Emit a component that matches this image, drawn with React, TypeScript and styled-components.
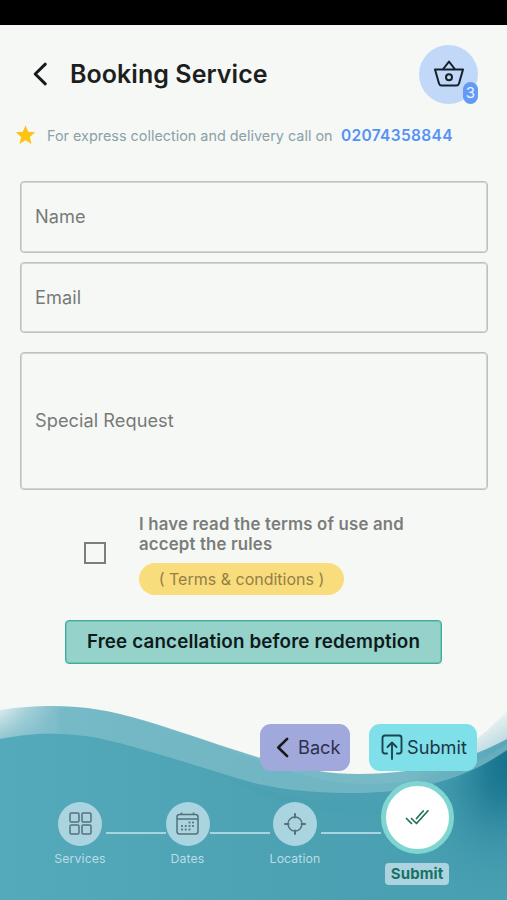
import React from "react";
import styled, { createGlobalStyle, css } from "styled-components";

const Global = createGlobalStyle`
  * { box-sizing: border-box; }
  body { margin: 0; background: #f6f8f6; }
  button { font: inherit; border: 0; padding: 0; cursor: pointer; }
`;

const Screen = styled.div`
  width: 507px;
  height: 900px;
  display: flex;
  flex-direction: column;
  overflow: hidden;
  background: #f6f8f6;
  color: #1d1f1f;
  font-family: Inter, "Liberation Sans", sans-serif;
`;

const StatusBar = styled.div`
  flex: none;
  height: 25px;
  background: #000;
`;

const Header = styled.header`
  display: flex;
  align-items: center;
  height: 98px;
  padding: 0 29px 0 32px;
`;

const BackLink = styled.button`
  display: flex;
  width: 38px;
  background: none;
`;

const Title = styled.h1`
  flex: 1;
  margin: 0;
  font-size: 25px;
  line-height: 30px;
  font-weight: 600;
  letter-spacing: 0.05px;
  white-space: nowrap;
`;

const Basket = styled.button`
  position: relative;
  display: flex;
  align-items: center;
  justify-content: center;
  width: 59px;
  height: 59px;
  border-radius: 50%;
  background: #c2d8f8;
`;

const BasketCount = styled.span`
  position: absolute;
  right: 0;
  bottom: 0;
  width: 15px;
  height: 22px;
  border-radius: 8px;
  background: #6399f7;
  color: #eef5ff;
  font-size: 15px;
  line-height: 22px;
  text-align: center;
`;

const ExpressRow = styled.div`
  display: flex;
  align-items: center;
  height: 24px;
  padding-left: 15px;
  font-size: 14.4px;
  color: #8ba1a7;
  white-space: nowrap;
`;

const ExpressText = styled.span`
  width: 294px;
  padding-left: 11px;
`;

const Phone = styled.span`
  padding-left: 11px;
  color: #5592f4;
  font-weight: 600;
  font-size: 15.5px;
  letter-spacing: 0.32px;
`;

const Form = styled.form`
  display: flex;
  flex-direction: column;
  align-items: center;
  padding: 34px 19px 0 20px;
`;

const Field = styled.label<{ $height: number; $gap?: number }>`
  display: flex;
  align-items: center;
  width: 468px;
  height: ${(p) => p.$height}px;
  margin-bottom: ${(p) => p.$gap ?? 0}px;
  padding: 0 0 2px 14px;
  border: 1px solid #bdc1be;
  border-radius: 4px;
  box-shadow: inset 0 0 0 1px #d3d7d4;
  color: #777a78;
  font-size: 18.2px;
  letter-spacing: 0.05px;
`;

const Agreement = styled.div`
  display: flex;
  align-self: stretch;
  align-items: center;
  height: 82px;
  margin: 23px 0 25px;
  padding-left: 64px;
`;

const Checkbox = styled.span`
  width: 22px;
  height: 22px;
  margin: 0 33px 3px 0;
  border: 2px solid #7b7e7b;
`;

const AgreementBody = styled.div`
  display: flex;
  flex-direction: column;
  align-items: flex-start;
`;

const AgreementText = styled.p`
  margin: 0 0 9px;
  color: #7b7d7b;
  font-size: 16.8px;
  line-height: 20px;
  font-weight: 600;
  letter-spacing: 0.17px;
  white-space: nowrap;
`;

const TermsButton = styled.button`
  width: 205px;
  height: 32px;
  border-radius: 16px;
  background: #f9dc7b;
  color: #937f48;
  font-size: 16px;
  white-space: nowrap;
`;

const Notice = styled.div`
  width: 377px;
  height: 44px;
  margin-right: 1px;
  border: 1px solid #3fae99;
  border-radius: 4px;
  box-shadow: inset 0 0 0 1px #72c3b5;
  background: #94d2ca;
  color: #0e1a1c;
  font-size: 18.8px;
  line-height: 42px;
  font-weight: 600;
  letter-spacing: 0.15px;
  text-align: center;
  white-space: nowrap;
`;

const Footer = styled.footer`
  position: relative;
  flex: none;
  height: 220px;
  margin-top: auto;
`;

const Waves = styled.svg`
  position: absolute;
  inset: 0;
`;

const FooterContent = styled.div`
  position: relative;
  display: flex;
  flex-direction: column;
  height: 100%;
  padding-top: 44px;
`;

const Actions = styled.div`
  display: flex;
  justify-content: flex-end;
  gap: 19px;
  padding-right: 30px;
`;

const ActionButton = styled.button<{ $tone: "violet" | "cyan" }>`
  display: flex;
  align-items: center;
  height: 46.5px;
  border-radius: 11px;
  color: #1d3545;
  font-size: 18.2px;
  white-space: nowrap;
  ${(p) =>
    p.$tone === "violet"
      ? css`
          width: 90px;
          padding-left: 15px;
          gap: 8px;
          background: #a1a8db;
          color: #2d3150;
        `
      : css`
          width: 108px;
          padding-left: 12px;
          gap: 4px;
          background: #80e0e9;
        `}
`;

const Steps = styled.nav`
  display: flex;
  align-items: flex-start;
  height: 112px;
  margin-top: 8.5px;
  padding-left: 45px;
`;

const Step = styled.div`
  display: flex;
  flex-direction: column;
  align-items: center;
  width: 70px;
  padding-top: 22.5px;
`;

const StepCircle = styled.span`
  display: flex;
  align-items: center;
  justify-content: center;
  width: 44px;
  height: 44px;
  border-radius: 50%;
  background: #aad4df;
`;

const StepLabel = styled.span`
  margin-top: 5px;
  color: #b9dde5;
  font-size: 12.3px;
  line-height: 16px;
  letter-spacing: 0.1px;
`;

const Connector = styled.span<{ $width: number; $left: number; $right: number }>`
  flex: none;
  width: ${(p) => p.$width}px;
  height: 2px;
  margin: 53px ${(p) => p.$right}px 0 ${(p) => p.$left}px;
  background: #a7d4df;
`;

const CurrentStep = styled.div`
  display: flex;
  flex-direction: column;
  align-items: center;
  width: 73px;
  padding-top: 2px;
`;

const CurrentCircle = styled.span`
  display: flex;
  align-items: center;
  justify-content: center;
  width: 73px;
  height: 73px;
  border: 5px solid #7fd6d0;
  border-radius: 50%;
  background: #fff;
`;

const CurrentLabel = styled.span`
  width: 64px;
  height: 22px;
  margin-top: 9px;
  border-radius: 4px;
  background: #acd3df;
  color: #167264;
  font-size: 15px;
  line-height: 22px;
  font-weight: 700;
  letter-spacing: 0.1px;
  text-align: center;
`;

const Chevron = ({ w, h, stroke = 3 }: { w: number; h: number; stroke?: number }) => (
  <svg width={w} height={h} viewBox="0 0 16 24" fill="none" stroke="#17191b" strokeWidth={stroke} strokeLinecap="round" strokeLinejoin="round">
    <path d="M13.3 2.2 3.2 12l10.1 9.8" />
  </svg>
);

const StarIcon = () => (
  <svg width="21" height="20" viewBox="0 0 21 20" fill="#fdc416">
    <path d="m10.500.3 2.700 6.400 7.100.6-5.400 4.700 1.600 6.900-6-3.600-6 3.600 1.600-6.900L.8 7.300l7-.6z" />
  </svg>
);

const BasketIcon = () => (
  <svg width="32" height="28" viewBox="0 0 32 28" fill="none" stroke="#16202a" strokeWidth="2" strokeLinejoin="round">
    <path d="M2 9.500h28L26 23.500q-.6 2-2.500 2h-15q-1.900 0-2.500-2zM9.800 9.500 16 1.600l6.200 7.900" />
    <circle cx="16" cy="17.200" r="3" />
  </svg>
);

const UploadIcon = () => (
  <svg width="22" height="26" viewBox="0 0 22 26" fill="none" stroke="#1b4350" strokeWidth="1.9" strokeLinecap="round" strokeLinejoin="round">
    <path d="M6 19.500H4q-2.500 0-2.500-2.500V4q0-2.500 2.500-2.500h14q2.500 0 2.500 2.500v13q0 2.500-2.500 2.500h-2M11 25V8.500M6.500 13 11 8.500l4.500 4.500" />
  </svg>
);

const GridIcon = () => (
  <svg width="23" height="23" viewBox="0 0 23 23" fill="none" stroke="#54717b" strokeWidth="1.5">
    <rect x="1" y="1" width="9" height="9" rx="1.300" />
    <rect x="13" y="1" width="9" height="9" rx="1.300" />
    <rect x="1" y="13" width="9" height="9" rx="1.300" />
    <rect x="13" y="13" width="9" height="9" rx="1.300" />
  </svg>
);

const calendarDots = [
  [13.5, 10.5], [17, 10.5],
  [6, 14], [9.7, 14], [13.5, 14], [17, 14],
  [6, 17.5], [9.7, 17.5], [13.5, 17.5],
];

const CalendarIcon = () => (
  <svg width="23" height="23" viewBox="0 0 23 23" fill="none" stroke="#54717b" strokeWidth="1.5">
    <rect x="1" y="2.500" width="21" height="19.500" rx="2.500" />
    <path d="M1 7h21M5.500 0.500v2.500M17.500 0.500v2.500" />
    {calendarDots.map(([x, y]) => (
      <rect key={`${x}-${y}`} x={x - 0.9} y={y - 0.9} width="1.8" height="1.8" fill="#54717b" stroke="none" />
    ))}
  </svg>
);

const TargetIcon = () => (
  <svg width="22" height="22" viewBox="0 0 22 22" fill="none" stroke="#54717b" strokeWidth="1.4" strokeLinecap="round">
    <circle cx="11" cy="11" r="7" />
    <path d="M11 1v3.500M11 17.500V21M1 11h3.500M17.500 11H21" strokeWidth="2" />
  </svg>
);

const DoubleCheckIcon = () => (
  <svg width="24" height="17" viewBox="0 0 24 17" fill="none" stroke="#22705f" strokeWidth="1.7" strokeLinecap="round" strokeLinejoin="round">
    <path d="m1.500 9.500 5 5M6.500 9.500l5 5L23 1.800M11.500 9.500 18.200 2" />
  </svg>
);

const WaveBackground = () => (
  <Waves width="507" height="220" viewBox="0 0 507 220" aria-hidden="true">
    <defs>
      <linearGradient id="base" x1="0" y1="0" x2="1" y2="0">
        <stop offset="0" stopColor="#54aabb" />
        <stop offset=".5" stopColor="#4da2b3" />
        <stop offset="1" stopColor="#479fb1" />
      </linearGradient>
      <linearGradient id="crest" gradientUnits="userSpaceOnUse" x1="0" y1="28" x2="507" y2="48">
        <stop offset="0" stopColor="#dfedef" />
        <stop offset=".05" stopColor="#a9d2d9" />
        <stop offset=".12" stopColor="#79bbc8" />
        <stop offset=".8" stopColor="#78b9c6" />
        <stop offset=".95" stopColor="#5fabbc" />
        <stop offset="1" stopColor="#5aa5b8" />
      </linearGradient>
      <linearGradient id="haze" gradientUnits="userSpaceOnUse" x1="0" y1="28" x2="0" y2="58">
        <stop offset="0" stopColor="#79bbc8" stopOpacity="0" />
        <stop offset="1" stopColor="#79bbc8" stopOpacity=".75" />
      </linearGradient>
      <linearGradient id="stripe" x1="0" y1="0" x2="1" y2="0">
        <stop offset="0" stopColor="#68b1c0" stopOpacity="0" />
        <stop offset=".2" stopColor="#68b1c0" stopOpacity=".3" />
        <stop offset="1" stopColor="#68b1c0" stopOpacity=".6" />
      </linearGradient>
      <linearGradient id="mist" gradientUnits="userSpaceOnUse" x1="478" y1="44" x2="494" y2="69">
        <stop offset="0" stopColor="#f3f6f5" />
        <stop offset="1" stopColor="#bcdae1" />
      </linearGradient>
      <radialGradient id="deep" gradientUnits="userSpaceOnUse" cx="0" cy="0" r="1" gradientTransform="translate(509 84) rotate(18) scale(92 140)">
        <stop offset="0" stopColor="#14718c" />
        <stop offset=".25" stopColor="#1c7892" stopOpacity=".85" />
        <stop offset=".6" stopColor="#2f899f" stopOpacity=".42" />
        <stop offset="1" stopColor="#459bb0" stopOpacity="0" />
      </radialGradient>
    </defs>
    <path d="M420 86C455 78 478 61 507 31v50L420 105z" fill="url(#mist)" />
    <path d="M0 30C20 27 35 26 52 26c32 0 61 5 94 15 40 12 75 25 108 35 36 11 70 18 104 18 57 0 104-11 149-35v161H0z" fill="url(#crest)" />
    <path d="M0 30C20 27 35 26 52 26v38H0z" fill="url(#haze)" />
    <path d="M70 26.500C110 28 145 42 180 53c70 22 126 51 187 51 56 0 104-16 140-40v156H30V40z" fill="url(#stripe)" />
    <path d="M0 59c25-5 43-6 60-5 38 1 67 11 108 23 31 9 57 18 86 26 34 8 68 10 99 10 60 0 112-13 154-43v150H0z" fill="url(#base)" />
    <path d="M220 94c45 19 88 29 133 29 62 0 111-20 154-48v23c-49 24-99 36-149 36-48 0-93-14-138-40z" fill="#3e98ab" opacity=".07" />
    <path d="M353 113c60 0 112-13 154-43v150H353z" fill="url(#deep)" />
  </Waves>
);

export default function App() {
  return (
    <>
      <Global />
      <Screen>
        <StatusBar />
        <Header>
          <BackLink aria-label="Go back">
            <Chevron w={16} h={24} />
          </BackLink>
          <Title>Booking Service</Title>
          <Basket aria-label="Basket">
            <BasketIcon />
            <BasketCount>3</BasketCount>
          </Basket>
        </Header>
        <ExpressRow>
          <StarIcon />
          <ExpressText>For express collection and delivery call on</ExpressText>
          <Phone>02074358844</Phone>
        </ExpressRow>
        <Form>
          <Field $height={72} $gap={9}>Name</Field>
          <Field $height={71} $gap={19}>Email</Field>
          <Field $height={138}>Special Request</Field>
          <Agreement>
            <Checkbox role="checkbox" aria-checked="false" />
            <AgreementBody>
              <AgreementText>
                I have read the terms of use and
                <br />
                accept the rules
              </AgreementText>
              <TermsButton type="button">( Terms &amp; conditions )</TermsButton>
            </AgreementBody>
          </Agreement>
          <Notice>Free cancellation before redemption</Notice>
        </Form>
        <Footer>
          <WaveBackground />
          <FooterContent>
            <Actions>
              <ActionButton $tone="violet">
                <Chevron w={15} h={21} />
                Back
              </ActionButton>
              <ActionButton $tone="cyan">
                <UploadIcon />
                Submit
              </ActionButton>
            </Actions>
            <Steps>
              <Step>
                <StepCircle><GridIcon /></StepCircle>
                <StepLabel>Services</StepLabel>
              </Step>
              <Connector $width={60} $left={-9} $right={-13.5} />
              <Step>
                <StepCircle><CalendarIcon /></StepCircle>
                <StepLabel>Dates</StepLabel>
              </Step>
              <Connector $width={60} $left={-12.5} $right={-10} />
              <Step>
                <StepCircle><TargetIcon /></StepCircle>
                <StepLabel>Location</StepLabel>
              </Step>
              <Connector $width={60} $left={-9} $right={-0.5} />
              <CurrentStep>
                <CurrentCircle><DoubleCheckIcon /></CurrentCircle>
                <CurrentLabel>Submit</CurrentLabel>
              </CurrentStep>
            </Steps>
          </FooterContent>
        </Footer>
      </Screen>
    </>
  );
}
